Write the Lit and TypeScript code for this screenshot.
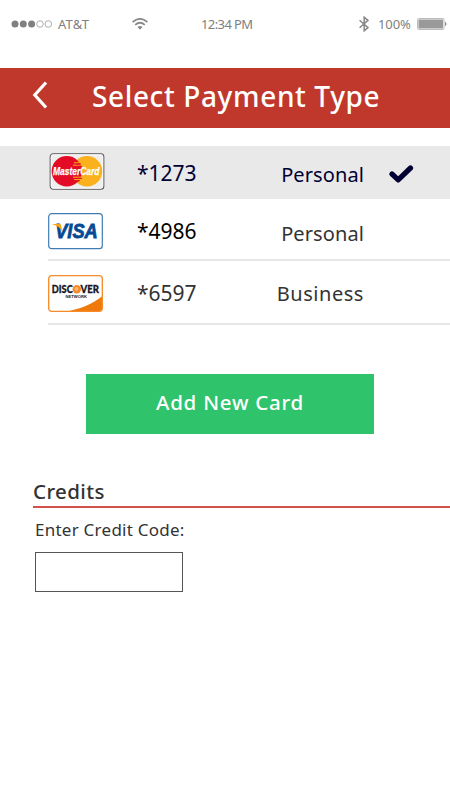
import { LitElement, html, css, svg } from "lit";
import { customElement, property } from "lit/decorators.js";

type Brand = "mastercard" | "visa" | "discover";

const mastercard = svg`
  <rect x="1.2" y=".8" width="53.6" height="35.4" rx="3" fill="#eee" stroke="#555" stroke-width="1.1"/>
  <rect x="2.2" y="1.8" width="51.6" height="33.4" rx="2" fill="none" stroke="#fff" stroke-width=".8"/>
  <circle cx="38" cy="18.2" r="15.2" fill="#fbb01e"/>
  <circle cx="17.8" cy="18.2" r="15.2" fill="#e30b25"/>
  <path d="M25 9.8h6M24 12.2h8M24 24.2h8M25 26.6h6" stroke="#fbb01e" stroke-width="1"/>
  <path d="M27 11h5M28 13.4h5M28 25.4h5M27 27.8h4" stroke="#e30b25" stroke-width="1"/>
  <text x="4" y="22" class="mc" textLength="46.5" lengthAdjust="spacingAndGlyphs">MasterCard</text>`;

const visa = svg`
  <rect x=".7" y=".7" width="53.6" height="35" rx="3" fill="#fff" stroke="#3f7cb4" stroke-width="1.2"/>
  <text x="7.2" y="25.2" class="visa" textLength="42.5" lengthAdjust="spacingAndGlyphs">VISA</text>
  <path d="M4.6 11h6.9q1.3 0 1.6 1.3l1.3 6.4C12.2 15 9 12.6 4.6 11.6z" fill="#f7a61c"/>`;

const discover = svg`
  <defs><clipPath id="card"><rect x=".7" y=".7" width="53.6" height="35.6" rx="3"/></clipPath></defs>
  <rect x=".7" y=".7" width="53.6" height="35.6" rx="3" fill="#fff"/>
  <path d="M15 37C32 34.5 45 29 55 20.5V37z" fill="#ef7a0b" clip-path="url(#card)"/>
  <rect x=".7" y=".7" width="53.6" height="35.6" rx="3" fill="none" stroke="#f58a28" stroke-width="1.3"/>
  <text x="3.8" y="17.9" class="disc" textLength="21" lengthAdjust="spacingAndGlyphs">DISC</text>
  <circle cx="28.8" cy="14.2" r="4.2" fill="#f58a28"/>
  <circle cx="28.5" cy="13.8" r="1.9" fill="#fbb873"/>
  <text x="32.6" y="17.9" class="disc" textLength="18.5" lengthAdjust="spacingAndGlyphs">VER</text>
  <text x="17.5" y="22.7" class="net" textLength="21.5" lengthAdjust="spacingAndGlyphs">NETWORK</text>`;

const logos = { mastercard, visa, discover };

@customElement("card-logo")
export class CardLogo extends LitElement {
  @property() brand: Brand = "visa";
  static styles = css`
    :host { display: block; width: 56px; height: 38px; }
    svg { display: block; overflow: visible; }
    text { font-family: "Liberation Sans", sans-serif; font-weight: 700; }
    .mc { font-size: 10.5px; font-style: italic; fill: #fff; stroke: #fff; stroke-width: .25px; }
    .visa { font-size: 20px; font-style: italic; fill: #064a94; stroke: #064a94; stroke-width: .8px; }
    .disc { font-family: Lato, sans-serif; font-size: 10.8px; font-weight: 900; fill: #17171f; stroke: #17171f; stroke-width: .3px; }
    .net { font-size: 4px; fill: #222; }
  `;
  render() {
    return html`<svg width="56" height="38" viewBox="0 0 56 38">${logos[this.brand]}</svg>`;
  }
}

@customElement("status-bar")
export class StatusBar extends LitElement {
  static styles = css`
    :host {
      display: flex; align-items: center; height: 48px; padding-left: 11px; box-sizing: border-box;
      color: #808080; font: 13px/18px "Noto Sans", sans-serif; white-space: nowrap;
    }
    svg { display: block; flex: none; }
    .carrier { width: 74px; margin-left: 6px; letter-spacing: 0.2px; }
    .time { width: 158px; margin-left: 53px; letter-spacing: -0.6px; }
    .level { width: 39px; margin-left: 9px; letter-spacing: -0.1px; }
  `;
  render() {
    return html`
      <svg width="41" height="10" viewBox="0 0 41 10">
        <g fill="#808080"><circle cx="4" cy="5" r="3.5"/><circle cx="12.3" cy="5" r="3.5"/><circle cx="20.6" cy="5" r="3.5"/></g>
        <g fill="none" stroke="#999" stroke-width=".8"><circle cx="29" cy="5" r="3.3"/><circle cx="37.3" cy="5" r="3.3"/></g>
      </svg>
      <span class="carrier">AT&amp;T</span>
      <svg width="16" height="12" viewBox="0 0 16 12" fill="none" stroke="#8a8a8a" stroke-width="1.8">
        <path d="M.6 4.2Q8-2.4 15.4 4.2M3.2 6.9Q8 2.7 12.8 6.9"/>
        <path d="M5.5 9q2.5-2 5 0L8 11.8z" fill="#8a8a8a" stroke="none"/>
      </svg>
      <span class="time">12:34 PM</span>
      <svg width="10" height="16" viewBox="0 0 10 16" fill="none" stroke="#858585" stroke-width="1.5">
        <path d="M.6 4.2l8.4 7.4-3.8 3.2V1.200L9 4.4.6 11.8"/>
      </svg>
      <span class="level">100%</span>
      <svg width="30" height="12" viewBox="0 0 30 12">
        <rect x=".5" y=".5" width="26.5" height="11" rx="1.2" fill="#fff" stroke="#aaa" stroke-width=".8"/>
        <rect x="1.5" y="1.5" width="24.5" height="9" fill="#999"/>
        <path d="M28 3.8q1.6.6 1.6 2.200T28 8.200z" fill="#999"/>
      </svg>`;
  }
}

@customElement("app-root")
export class AppRoot extends LitElement {
  static styles = css`
    :host {
      display: block; width: 450px; height: 810px; overflow: hidden; background: #fff;
      font-family: "Noto Sans", sans-serif; color: #333;
    }
    header {
      display: flex; align-items: center; height: 60px; margin-top: 20px; box-sizing: border-box;
      padding: 0 0 4px 32px; background: #c0382b; color: #fff;
    }
    .back { margin-bottom: 2px; }
    h1 { margin: 0 0 0 44px; font-size: 28px; line-height: 40px; font-weight: 500; letter-spacing: 0.63px; white-space: nowrap; }
    .cards { margin-top: 18px; }
    .row { display: flex; box-sizing: border-box; height: 62px; margin-left: 48px; border-bottom: 2px solid #e6e6e6; }
    .row.selected { height: 53px; margin-left: 0; padding-left: 49px; border: 0; background: #e9e9e9; color: #003; }
    .row.discover { height: 64px; }
    .visa { color: #000; }
    card-logo { margin-top: 14px; }
    .selected card-logo { width: 55px; margin-top: 7px; }
    .number { width: 80px; margin: 17px 0 0 33px; font-size: 21px; line-height: 30px; }
    .name { width: 147px; margin-top: 20px; font-size: 20px; line-height: 30px; text-align: right; letter-spacing: 0.1px; }
    .visa .name { color: #333; }
    .discover .name { margin-top: 18px; letter-spacing: 0.55px; }
    .selected .number { margin-top: 12px; }
    .selected .name { margin-top: 14px; }
    .check { margin: 18px 0 0 24px; }
    .add {
      display: block; width: 288px; height: 60px; margin: 49px 0 0 86px; padding: 0 0 5px; border: 0;
      background: #2fc36b; color: #fff; font: 500 20.5px/28px "Noto Sans", sans-serif; letter-spacing: 0.75px;
    }
    .credits { margin: 42px 0 0 33px; }
    h2 { margin: 0; height: 30px; font-size: 20.5px; line-height: 30px; font-weight: 500; border-bottom: 2px solid #d2514b; letter-spacing: 0.4px; }
    label { display: block; margin: 10px 0 0 2px; font-size: 17px; line-height: 24px; letter-spacing: 0.25px; }
    input { display: block; box-sizing: border-box; width: 148px; height: 40px; margin: 10px 0 0 2px; border: 1.5px solid #555; background: #fff; }
  `;
  render() {
    const cards: { brand: Brand; number: string; name: string; selected?: boolean }[] = [
      { brand: "mastercard", number: "*1273", name: "Personal", selected: true },
      { brand: "visa", number: "*4986", name: "Personal" },
      { brand: "discover", number: "*6597", name: "Business" },
    ];
    return html`
      <status-bar></status-bar>
      <header>
        <svg class="back" width="16" height="28" viewBox="0 0 16 28" fill="none" stroke="#fff" stroke-width="3.2"><path d="M14 1.500L2.8 14 14 26.5"/></svg>
        <h1>Select Payment Type</h1>
      </header>
      <div class="cards">
        ${cards.map((c) => html`
          <div class="row ${c.brand} ${c.selected ? "selected" : ""}">
            <card-logo brand=${c.brand}></card-logo>
            <span class="number">${c.number}</span>
            <span class="name">${c.name}</span>
            ${c.selected ? html`<svg class="check" width="26" height="20" viewBox="0 0 26 20" fill="none" stroke="#003" stroke-width="5.2" stroke-linecap="round" stroke-linejoin="round"><path d="M4 10l6.200 5.8L22.5 4"/></svg>` : ""}
          </div>`)}
      </div>
      <button class="add">Add New Card</button>
      <section class="credits">
        <h2>Credits</h2>
        <label for="code">Enter Credit Code:</label>
        <input id="code" />
      </section>`;
  }
}
